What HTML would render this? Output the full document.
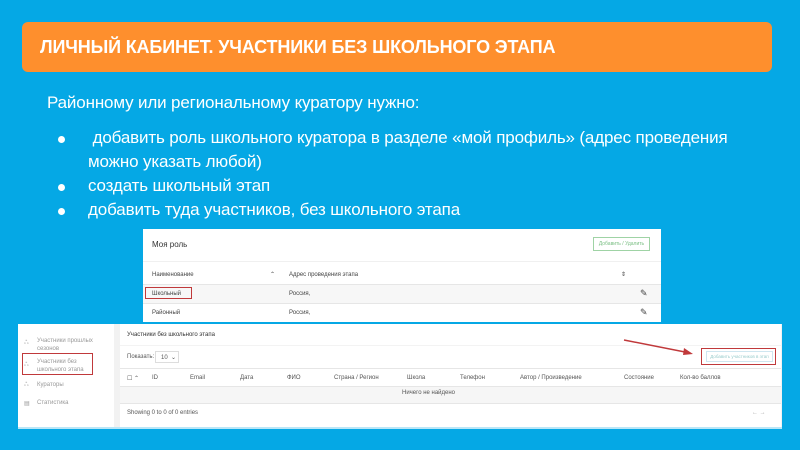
<!DOCTYPE html>
<html><head><meta charset="utf-8"><style>
*{margin:0;padding:0;box-sizing:border-box}
body{width:800px;height:450px;background:#05A8E5;position:relative;overflow:hidden;font-family:"Liberation Sans",sans-serif}
.bar{position:absolute;left:22px;top:22px;width:750px;height:50px;background:#FE8F2D;border-radius:6px}
.bar span{position:absolute;left:18px;top:15px;font-weight:bold;font-size:18px;color:#fff;white-space:nowrap;letter-spacing:-0.15px}
.t{position:absolute;color:#fff;font-size:17px;white-space:nowrap;letter-spacing:-0.15px}
.dot{position:absolute;width:7px;height:7px;border-radius:50%;background:#fff}
.s{position:absolute;background:#fff;color:#444;font-size:6px;white-space:nowrap}
.a{position:absolute}
.ln{position:absolute;height:1px;background:#e6e6e6}
</style></head><body>
<div class="bar"><span>ЛИЧНЫЙ КАБИНЕТ. УЧАСТНИКИ БЕЗ ШКОЛЬНОГО ЭТАПА</span></div>
<div class="t" style="left:47px;top:93px">Районному или региональному куратору нужно:</div>
<div class="dot" style="left:58px;top:136px"></div>
<div class="t" style="left:88px;top:128px">&nbsp;добавить роль школьного куратора в разделе «мой профиль» (адрес проведения</div>
<div class="t" style="left:88px;top:152px">можно указать любой)</div>
<div class="dot" style="left:58px;top:184px"></div>
<div class="t" style="left:88px;top:176px">создать школьный этап</div>
<div class="dot" style="left:58px;top:208px"></div>
<div class="t" style="left:88px;top:200px">добавить туда участников, без школьного этапа</div>

<!-- screenshot 1 -->
<div class="s" style="left:143px;top:229px;width:518px;height:93px">
 <div class="a" style="left:9px;top:11px;font-size:8px;color:#333">Моя роль</div>
 <div class="a" style="left:450px;top:8px;width:57px;height:14px;border:1px solid #9fd3a5;color:#7bbf84;font-size:5px;line-height:12px;text-align:center">Добавить / Удалить</div>
 <div class="ln" style="left:0;top:32px;width:518px;background:#f0f0f0"></div>
 <div class="a" style="left:9px;top:43px">Наименование</div><div class="a" style="left:127px;top:42px">⌃</div>
 <div class="a" style="left:146px;top:43px">Адрес проведения этапа</div><div class="a" style="left:478px;top:42px">⇕</div>
 <div class="ln" style="left:0;top:55px;width:518px"></div>
 <div class="a" style="left:0;top:56px;width:518px;height:18px;background:#f7f7f7"></div>
 <div class="a" style="left:2px;top:58px;width:47px;height:12px;border:1.5px solid #c0393b"></div>
 <div class="a" style="left:9px;top:62px">Школьный</div><div class="a" style="left:146px;top:62px">Россия,</div>
 <div class="a" style="left:497px;top:59px;font-size:9px">✎</div>
 <div class="ln" style="left:0;top:74px;width:518px"></div>
 <div class="a" style="left:9px;top:81px">Районный</div><div class="a" style="left:146px;top:81px">Россия,</div>
 <div class="a" style="left:497px;top:78px;font-size:9px">✎</div>
</div>

<!-- screenshot 2 -->
<div class="a" style="left:18px;top:324px;width:764px;height:105px;background:#f2f2f2;border-bottom:2px solid #b9e6f7"></div>
<div class="s" style="left:18px;top:324px;width:96px;height:103px;color:#999">
 <div class="a" style="left:6px;top:16px">ஃ</div><div class="a" style="left:19px;top:13px;line-height:8px">Участники прошлых<br>сезонов</div>
 <div class="a" style="left:4px;top:29px;width:71px;height:22px;border:1.5px solid #c0393b"></div>
 <div class="a" style="left:6px;top:38px">ஃ</div><div class="a" style="left:19px;top:34px;line-height:8px">Участники без<br>школьного этапа</div>
 <div class="a" style="left:6px;top:58px">ஃ</div><div class="a" style="left:19px;top:58px">Кураторы</div>
 <div class="a" style="left:6px;top:76px">▤</div><div class="a" style="left:19px;top:76px">Статистика</div>
</div>
<div class="s" style="left:120px;top:324px;width:661px;height:103px;color:#555">
 <div class="a" style="left:7px;top:8px;color:#333">Участники без школьного этапа</div>
 <div class="ln" style="left:0;top:21px;width:661px;background:#f3f3f3"></div>
 <div class="a" style="left:7px;top:30px">Показать:</div>
 <div class="a" style="left:35px;top:27px;width:24px;height:12px;border:1px solid #ddd;padding:2px 0 0 5px">10 &nbsp;⌄</div>
 <div class="a" style="left:581px;top:24px;width:75px;height:17px;border:1.5px solid #c0393b"></div>
 <div class="a" style="left:586px;top:27px;width:67px;height:11px;border:1px solid #cfe6f0;color:#9cc;font-size:4.5px;line-height:9px;text-align:center">Добавить участников в этап</div>
 <div class="ln" style="left:0;top:44px;width:661px"></div>
 <div class="a" style="left:7px;top:51px">☐ ⌃</div>
 <div class="a" style="left:32px;top:51px">ID</div>
 <div class="a" style="left:70px;top:51px">Email</div>
 <div class="a" style="left:120px;top:51px">Дата</div>
 <div class="a" style="left:167px;top:51px">ФИО</div>
 <div class="a" style="left:214px;top:51px">Страна / Регион</div>
 <div class="a" style="left:287px;top:51px">Школа</div>
 <div class="a" style="left:340px;top:51px">Телефон</div>
 <div class="a" style="left:400px;top:51px">Автор / Произведение</div>
 <div class="a" style="left:504px;top:51px">Состояние</div>
 <div class="a" style="left:560px;top:51px">Кол-во баллов</div>
 <div class="ln" style="left:0;top:62px;width:661px"></div>
 <div class="a" style="left:0;top:63px;width:661px;height:16px;background:#f6f6f6"></div>
 <div class="a" style="left:282px;top:66px">Ничего не найдено</div>
 <div class="ln" style="left:0;top:79px;width:661px"></div>
 <div class="a" style="left:7px;top:86px">Showing 0 to 0 of 0 entries</div>
 <div class="a" style="left:632px;top:86px;color:#aaa">←  →</div>
</div>
<svg class="a" style="left:0;top:0" width="800" height="450"><line x1="624" y1="340" x2="690" y2="353" stroke="#c0393b" stroke-width="1.5"/><polygon points="693,354 684,348 683,355" fill="#c0393b"/></svg>
</body></html>
